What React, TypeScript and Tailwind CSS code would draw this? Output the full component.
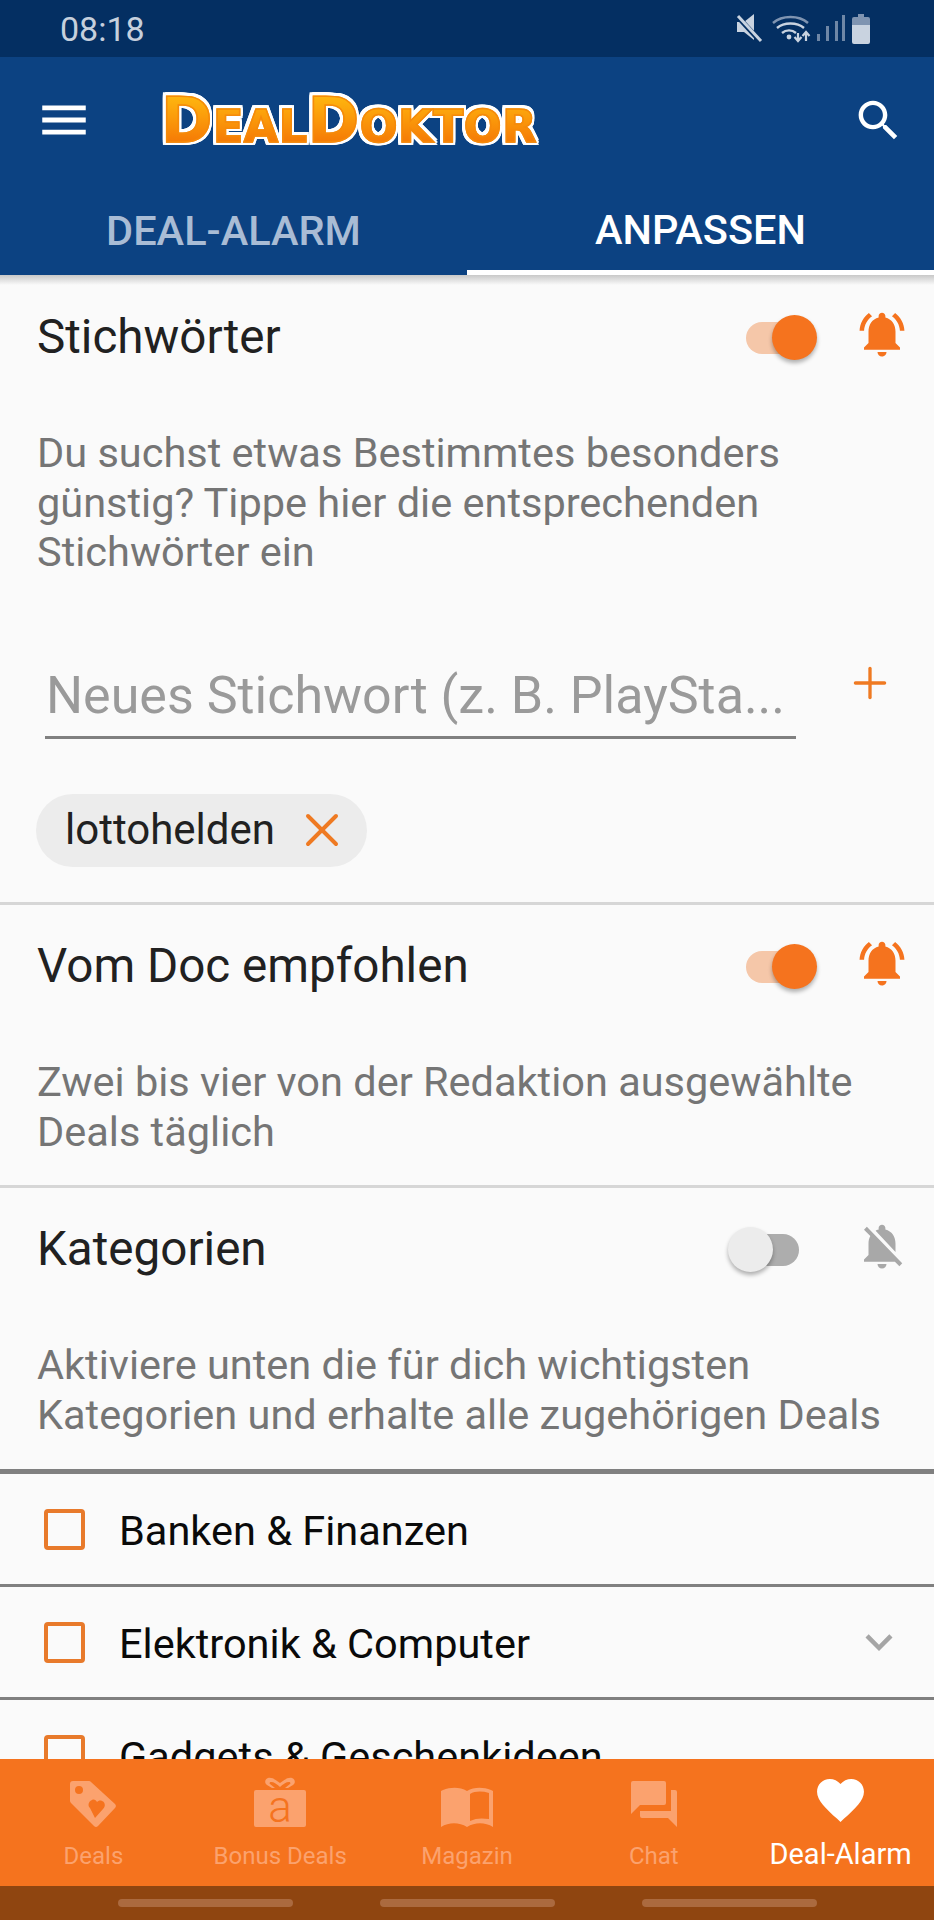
import { X, Plus } from "lucide-react";

const font = "font-['Roboto',sans-serif]";

const BELL_ON =
  "M7.58 4.08L6.15 2.65C3.75 4.48 2.17 7.3 2.03 10.5h2c.15-2.65 1.51-4.97 3.55-6.42zm12.39 6.42h2c-.15-3.2-1.73-6.02-4.12-7.85l-1.42 1.43c2.02 1.45 3.39 3.77 3.54 6.42zM18 11c0-3.07-1.64-5.64-4.5-6.32V4c0-.83-.67-1.5-1.5-1.5s-1.5.67-1.5 1.5v.68C7.63 5.36 6 7.92 6 11v5l-2 2v1h16v-1l-2-2v-5zm-6 11c.14 0 .27-.01.4-.04.65-.14 1.18-.58 1.44-1.18.1-.24.15-.5.15-.78h-4c.01 1.1.9 2 2.01 2z";
const BELL_OFF =
  "M20 18.69L7.84 6.14 5.27 3.49 4 4.76l2.8 2.8v.01c-.52.99-.8 2.16-.8 3.42v5l-2 2v1h13.73l2 2L21 19.72l-1-1.03zM12 22c1.11 0 2-.89 2-2h-4c0 1.11.89 2 2 2zm6-7.32V11c0-3.08-1.64-5.64-4.5-6.32V4c0-.83-.67-1.5-1.5-1.5s-1.5.67-1.5 1.5v.68c-.15.03-.29.08-.42.12-.1.03-.2.07-.3.11h-.01c-.2.08-.4.17-.59.27-.01 0-.01 0-.02.01L18 14.68z";

function Toggle({ on }: { on: boolean }) {
  return (
    <div className="relative h-[32px] w-[53px]">
      <div className={on ? "h-full rounded-full bg-[#f5c7a9]" : "h-full rounded-full bg-[#adadad]"} />
      {on ? (
        <div className="absolute left-[26px] top-[-7px] h-[45px] w-[45px] rounded-full bg-[#f5731e] shadow-[0_3px_4px_rgba(0,0,0,0.3)]" />
      ) : (
        <div className="absolute left-[-18px] top-[-7px] h-[45px] w-[45px] rounded-full bg-[#ececec] shadow-[0_3px_4px_rgba(0,0,0,0.3)]" />
      )}
    </div>
  );
}

function SectionHead({ title, on }: { title: string; on: boolean }) {
  return (
    <div className="flex h-[124px] items-center pl-[37px]">
      <span className="flex-1 text-[47.6px] leading-none text-[#212121]">{title}</span>
      <div className="mr-[56px] mb-[1px]">
        <Toggle on={on} />
      </div>
      <svg
        viewBox="0 0 24 24"
        className={on ? "mr-[25px] mb-[8px] h-[54px] w-[54px] fill-[#f5731e]" : "mr-[25px] mb-[8px] h-[54px] w-[54px] fill-[#a8a8a8]"}
      >
        <path d={on ? BELL_ON : BELL_OFF} />
      </svg>
    </div>
  );
}

function CategoryRow({ label, chevron }: { label: string; chevron?: boolean }) {
  return (
    <div className="flex h-[113px] shrink-0 items-center border-b-[3px] border-[#808080] pl-[44px]">
      <div className="h-[41px] w-[41px] rounded-[4px] border-[4px] border-[#e87a2b]" />
      <span className="ml-[34px] flex-1 pt-[3px] text-[41.5px] leading-none text-[#0a0a0a]">{label}</span>
      {chevron && (
        <svg viewBox="0 0 24 24" className="mr-[28px] h-[54px] w-[54px] fill-[#a5a5a5]">
          <path d="M16.59 8.59L12 13.17 7.41 8.59 6 10l6 6 6-6z" />
        </svg>
      )}
    </div>
  );
}

function Logo() {
  const big = "text-[62px] leading-none";
  const small = "text-[44.5px] leading-none";
  return (
    <div className="ml-[68px] flex h-[60px] items-end pt-[4px] [filter:drop-shadow(2.5px_0_0_#fff)_drop-shadow(-2.5px_0_0_#fff)_drop-shadow(0_2.5px_0_#fff)_drop-shadow(0_-2.5px_0_#fff)]">
      <span className="translate-y-[2px] bg-gradient-to-b from-[#ffbe10] to-[#f26c04] bg-clip-text font-['DejaVu_Sans',sans-serif] font-bold tracking-[0.5px] text-transparent [-webkit-text-stroke:1.5px_#f58a0a]">
        <span className={big}>D</span>
        <span className={small}>EAL</span>
        <span className={big}>D</span>
        <span className={small}>OKTOR</span>
      </span>
    </div>
  );
}

function NavItem({ label, active, children }: { label: string; active?: boolean; children: React.ReactNode }) {
  return (
    <div className={active ? "flex w-[187px] flex-col items-center text-white" : "flex w-[187px] flex-col items-center text-[#fba26e]"}>
      <div className="flex h-[50px] items-end justify-center">{children}</div>
      <span className={active ? "mt-[12px] text-[29px] leading-[30px]" : "mt-[14px] text-[24px] leading-[30px]"}>{label}</span>
    </div>
  );
}

export default function App() {
  return (
    <div className={`${font} flex h-[1920px] w-[934px] flex-col overflow-hidden bg-[#fafafa]`}>
      {/* Status bar */}
      <div className="flex h-[57px] shrink-0 items-center bg-[#042f62] pl-[60px] pr-[58px] text-[#c6d0dd]">
        <span className="flex-1 text-[34px] leading-none">08:18</span>
        <svg viewBox="0 0 140 30" className="h-[30px] w-[140px]" fill="#c9d3e0">
          {/* mute */}
          <path d="M1 8h7l10-8v26L8 18H1z" />
          <path d="M2 3l22 24" stroke="#042f62" strokeWidth="5" />
          <path d="M2 2l23 25" stroke="#c9d3e0" strokeWidth="3" fill="none" />
          {/* wifi */}
          <path d="M37 9c9-8 26-8 35 0" stroke="#7f94b1" strokeWidth="2.4" fill="none" />
          <path d="M41 14c7-6 20-6 27 0" stroke="#c9d3e0" strokeWidth="2.4" fill="none" />
          <path d="M46 19c4-3.5 10-3.5 14 0" stroke="#c9d3e0" strokeWidth="2.4" fill="none" />
          <circle cx="53" cy="23" r="2.4" />
          <path d="M62 19v7M58.5 23l3.5 4 3.5-4" stroke="#c9d3e0" strokeWidth="2.2" fill="none" />
          <path d="M70 27v-8M66.5 22l3.5-4 3.5 4" stroke="#c9d3e0" strokeWidth="2.2" fill="none" />
          {/* signal */}
          <rect x="81" y="20" width="3" height="7" fill="#6f87a6" />
          <rect x="90" y="12" width="3" height="15" fill="#6f87a6" />
          <rect x="99" y="7" width="3" height="20" fill="#6f87a6" />
          <rect x="106" y="1" width="3" height="26" fill="#6f87a6" />
          {/* battery */}
          <path d="M122 0h6v3h4a2 2 0 0 1 2 2v6h-18V5a2 2 0 0 1 2-2h4z" fill="#7f94b1" />
          <path d="M116 11h18v17a2 2 0 0 1-2 2h-14a2 2 0 0 1-2-2z" />
        </svg>
      </div>

      {/* App bar */}
      <div className="h-[218px] shrink-0 bg-[#0c4282]">
        <div className="flex h-[121px] items-center pl-[35px] pr-[29px] pt-[5px]">
          <svg viewBox="0 0 24 24" className="h-[58px] w-[58px] fill-white">
            <path d="M3 18h18v-2H3v2zm0-5h18v-2H3v2zm0-7v2h18V6H3z" />
          </svg>
          <div className="flex-1">
            <Logo />
          </div>
          <svg viewBox="0 0 24 24" className="h-[53px] w-[53px] fill-white">
            <path d="M15.5 14h-.79l-.28-.27C15.41 12.59 16 11.11 16 9.5 16 5.91 13.09 3 9.5 3S3 5.91 3 9.5 5.91 16 9.5 16c1.61 0 3.09-.59 4.23-1.57l.27.28v.79l5 4.99L20.49 19l-4.99-5zm-6 0C7.01 14 5 11.99 5 9.5S7.01 5 9.5 5 14 7.01 14 9.5 11.99 14 9.5 14z" />
          </svg>
        </div>
        <div className="flex h-[97px]">
          <div className="flex flex-1 items-center justify-center pt-[9px] text-[41.5px] font-medium text-[#a9bcd5]">
            DEAL-ALARM
          </div>
          <div className="flex flex-1 items-center justify-center border-b-[5px] border-white pt-[13px] text-[41.5px] font-medium text-white">
            ANPASSEN
          </div>
        </div>
      </div>

      {/* Scrolling content */}
      <div className="relative flex-1 overflow-hidden">
        <div className="absolute inset-x-0 top-0 h-[10px] bg-gradient-to-b from-[#c8c8c8] to-[#fafafa]" />

        <section className="h-[630px] border-b-[3px] border-[#d6d6d6] pt-[1px]">
          <SectionHead title="Stichwörter" on />
          <p className="mt-[28px] pl-[37px] pr-[60px] text-[41.5px] leading-[49.5px] text-[#757575]">
            Du suchst etwas Bestimmtes besonders günstig? Tippe hier die entsprechenden Stichwörter ein
          </p>
          <div className="mt-[90px] flex items-start pl-[45px]">
            <div className="w-[751px] whitespace-nowrap border-b-[3px] border-[#808080] pb-[11px] pl-[1px] text-[52px] leading-[58px] text-[#9a9a9a]">
              Neues Stichwort (z. B. PlaySta...
            </div>
            <Plus className="ml-[49px] mt-[-9px] h-[50px] w-[50px] text-[#ef7a22]" strokeWidth={1.6} />
          </div>
          <div className="ml-[36px] mt-[55px] flex h-[73px] w-[331px] items-center rounded-full bg-[#ececec] pl-[29px]">
            <span className="text-[42px] leading-none text-[#212121]">lottohelden</span>
            <X className="ml-[19px] h-[56px] w-[56px] text-[#ef7a22]" strokeWidth={1.7} />
          </div>
        </section>

        <section className="h-[283px] border-b-[3px] border-[#d6d6d6]">
          <SectionHead title="Vom Doc empfohlen" on />
          <p className="mt-[28px] pl-[37px] pr-[60px] text-[41.5px] leading-[49.5px] text-[#757575]">
            Zwei bis vier von der Redaktion ausgewählte Deals täglich
          </p>
        </section>

        <section className="h-[286px] border-b-[5px] border-[#808080]">
          <SectionHead title="Kategorien" on={false} />
          <p className="mt-[28px] pl-[37px] pr-[40px] text-[41.5px] leading-[49.5px] text-[#757575]">
            Aktiviere unten die für dich wichtigsten Kategorien und erhalte alle zugehörigen Deals
          </p>
        </section>

        <CategoryRow label="Banken & Finanzen" />
        <CategoryRow label="Elektronik & Computer" chevron />
        <CategoryRow label="Gadgets & Geschenkideen" />
      </div>

      {/* Bottom nav */}
      <div className="flex h-[127px] shrink-0 items-start bg-[#f5731e] pt-[18px]">
        <NavItem label="Deals">
          <svg viewBox="0 0 46 46" className="h-[46px] w-[46px] fill-current">
            <path fillRule="evenodd" d="M3 0h16a3 3 0 0 1 2 1l24 22a3 3 0 0 1 0 4L28 45a3 3 0 0 1-4 0L1 22a3 3 0 0 1-1-2V3a3 3 0 0 1 3-3zm6 5a4 4 0 1 0 0 8 4 4 0 0 0 0-8zm16 32 8-9c3-3 2-7-1-8-2-1-4 0-5 1-1-2-3-3-5-2-3 1-5 5-2 8z" />
          </svg>
        </NavItem>
        <NavItem label="Bonus Deals">
          <svg viewBox="0 0 52 50" className="h-[50px] w-[52px] fill-current">
            <path fillRule="evenodd" d="M14 1c4-1 8 2 12 5 4-3 8-6 12-5 3 1 4 5 1 7l-5 3h-3l5-4c1-1 0-2-1-2-3 0-6 2-9 5-3-3-6-5-9-5-1 0-2 1-1 2l5 4h-3l-5-3c-3-2-2-6 1-7zM2 13h48a2 2 0 0 1 2 2v33a2 2 0 0 1-2 2H2a2 2 0 0 1-2-2V15a2 2 0 0 1 2-2z" />
            <text x="26" y="45" textAnchor="middle" fontSize="44" fontWeight="300" fontFamily="Roboto, sans-serif" fill="#f5731e">a</text>
          </svg>
        </NavItem>
        <NavItem label="Magazin">
          <svg viewBox="0 0 52 40" className="h-[40px] w-[52px] fill-current">
            <path fillRule="evenodd" d="M2 3c8-3 17-3 24 1 7-4 16-4 24-1l2 1v36c-8-5-18-5-26 0-8-5-18-5-26 0V4zm27 4v27c6-3 12-3 19-2V6c-7-2-14-2-19 1z" />
          </svg>
        </NavItem>
        <NavItem label="Chat">
          <svg viewBox="0 0 46 46" className="h-[46px] w-[46px] fill-current">
            <path d="M2 0h31a2 2 0 0 1 2 2v20a2 2 0 0 1-2 2H9l-9 9V2a2 2 0 0 1 2-2z" />
            <path d="M40 9h4a2 2 0 0 1 2 2v35l-9-9H11a2 2 0 0 1-2-2v-5h31z" />
          </svg>
        </NavItem>
        <NavItem label="Deal-Alarm" active>
          <svg viewBox="0 0 24 22" className="mb-[5px] h-[43px] w-[47px] fill-current">
            <path d="M12 22l-1.7-1.6C4.5 15.1 0 11 0 6.5 0 2.9 2.8 0 6.5 0c2.1 0 4.1 1 5.5 2.6C13.4 1 15.4 0 17.5 0 21.2 0 24 2.9 24 6.5c0 4.5-4.5 8.6-10.3 13.9z" />
          </svg>
        </NavItem>
      </div>

      {/* System nav */}
      <div className="flex h-[34px] shrink-0 items-center justify-center gap-[87px] bg-[#8f4510]">
        <div className="h-[8px] w-[175px] rounded-full bg-[#ab6a3f]" />
        <div className="h-[8px] w-[175px] rounded-full bg-[#ab6a3f]" />
        <div className="h-[8px] w-[175px] rounded-full bg-[#ab6a3f]" />
      </div>
    </div>
  );
}
